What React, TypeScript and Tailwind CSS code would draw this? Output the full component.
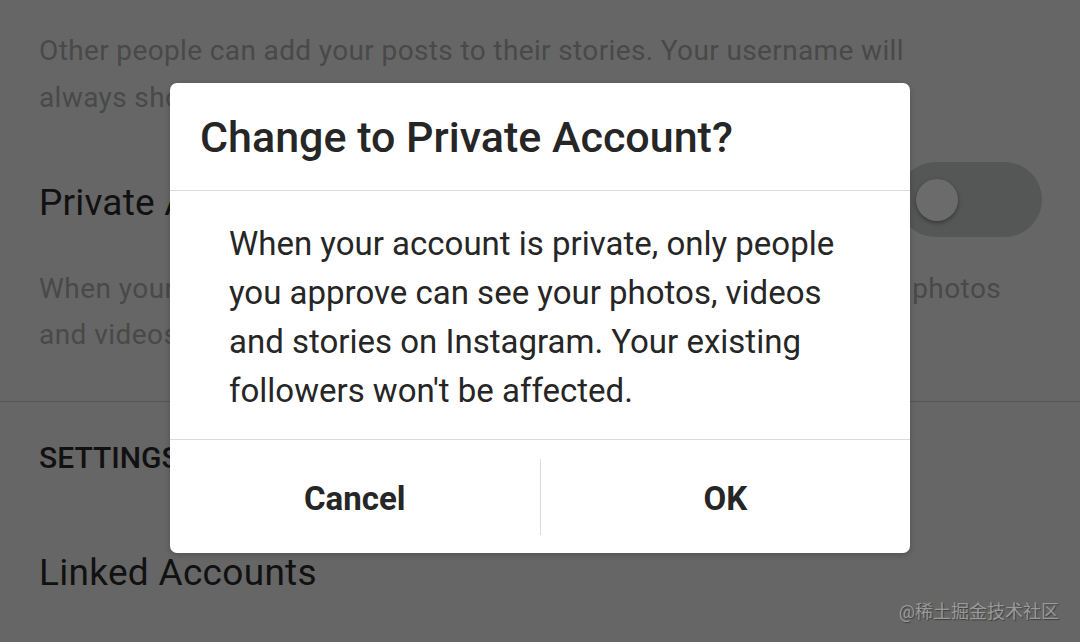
import React from "react";

const font = { fontFamily: "Roboto, 'Noto Sans', sans-serif" };

const Toggle = () => (
  <div className="relative h-[75px] w-[144px] rounded-full bg-[#555656]">
    <div className="absolute left-[18px] top-[17px] h-[42px] w-[42px] rounded-full bg-[#6b6b6b] shadow-[0_2px_4px_rgba(0,0,0,0.35)]" />
  </div>
);

const Dialog = () => (
  <div className="absolute left-[170px] top-[83px] flex h-[470px] w-[740px] flex-col rounded-[7px] bg-white shadow-[0_2px_6px_rgba(0,0,0,0.2)]">
    <div className="flex h-[108px] items-center border-b border-[#dbdbdb] pl-[30px]">
      <h2 className="text-[43px] font-medium leading-[50px] text-[#262626]">Change to Private Account?</h2>
    </div>
    <div className="flex h-[249px] flex-col justify-center border-b border-[#dbdbdb] pl-[59px] pt-[4px] text-[33px] leading-[49px] text-[#262626]">
      <p>When your account is private, only people</p>
      <p>you approve can see your photos, videos</p>
      <p>and stories on Instagram. Your existing</p>
      <p>followers won't be affected.</p>
    </div>
    <div className="flex flex-1 items-center">
      <button className="flex h-full flex-1 items-center justify-center pt-[4px] text-[33px] font-bold text-[#262626]">Cancel</button>
      <div className="h-[76px] w-px bg-[#dbdbdb]" />
      <button className="flex h-full flex-1 items-center justify-center pt-[4px] text-[33px] font-bold text-[#262626]">OK</button>
    </div>
  </div>
);

export default function App() {
  return (
    <div style={font} className="relative h-[642px] w-[1080px] overflow-hidden bg-[#666666]">
      <div className="flex flex-col">
        <div className="px-[39px] pt-[27px] text-[28px] leading-[47px] tracking-[0.37px] text-[#494949]">
          <p>Other people can add your posts to their stories. Your username will</p>
          <p>always show up with the post.</p>
        </div>
        <div className="mt-[41px] flex items-center justify-between pl-[39px] pr-[38px]">
          <span className="pt-[6px] text-[37px] tracking-[0.2px] text-[#111111]">Private Account</span>
          <Toggle />
        </div>
        <div className="mt-[29px] px-[39px] text-[28px] leading-[46px] tracking-[0.45px] text-[#494949]">
          <p>When your account is private, only people you approve can see your photos</p>
          <p>and videos on Instagram. Your existing followers won't be affected.</p>
        </div>
        <div className="mt-[43px] border-t border-[#555555]" />
        <div className="mt-[36px] px-[39px] text-[30px] font-medium leading-[40px] text-[#111111]">SETTINGS</div>
        <div className="mt-[73px] px-[39px] text-[37px] leading-[44px] tracking-[0.3px] text-[#111111]">Linked Accounts</div>
      </div>
      <Dialog />
      <div
        style={{ fontFamily: "Roboto, 'Noto Sans CJK SC', sans-serif" }}
        className="absolute bottom-[17px] right-[21px] text-[18px] text-[#9a9a9a] [text-shadow:1px_1px_1px_rgba(0,0,0,0.4)]"
      >
        @稀土掘金技术社区
      </div>
    </div>
  );
}
